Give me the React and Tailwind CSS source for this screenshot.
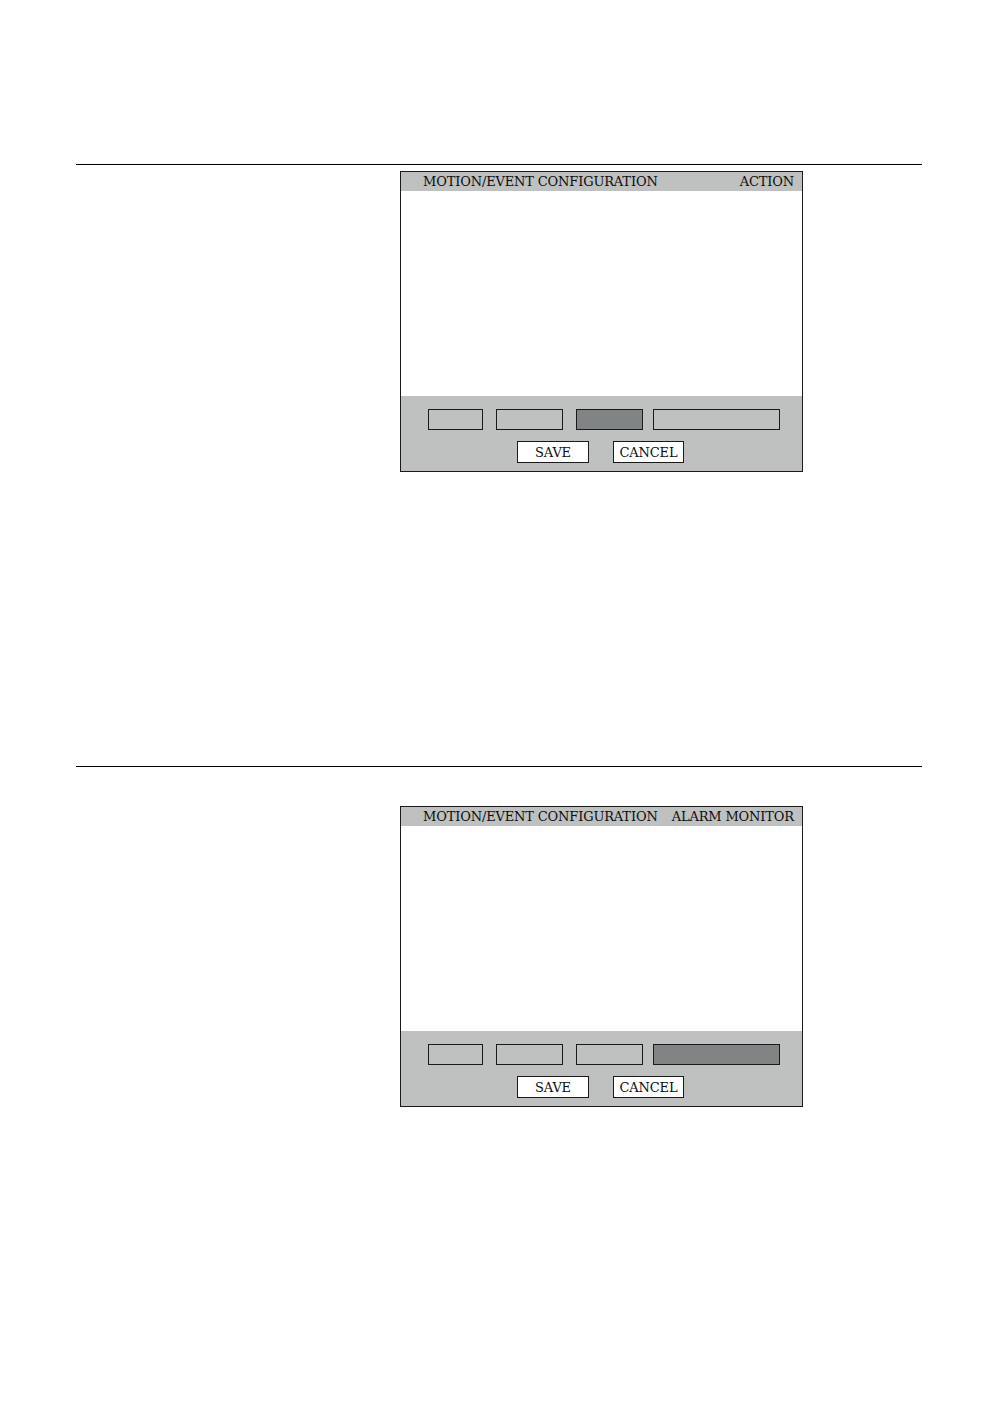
import React from "react";

function Panel({ title, active }) {
  const boxes = [
    { w: "w-[55px]", ml: "ml-0" },
    { w: "w-[67px]", ml: "ml-[13px]" },
    { w: "w-[67px]", ml: "ml-[13px]" },
    { w: "w-[127px]", ml: "ml-[10px]" },
  ];
  return (
    <div className="ml-[324px] w-[403px] h-[301px] border border-[#1a1a1a] flex flex-col">
      <div className="h-[19px] bg-[#bfc0c0] flex items-center justify-between pl-[22px] pr-[8px] text-[13px] leading-none tracking-[-0.15px] text-[#0d0d0d] whitespace-nowrap">
        <span>MOTION/EVENT CONFIGURATION</span>
        <span>{title}</span>
      </div>
      <div className="h-[205px] bg-white" />
      <div className="flex-1 bg-[#bfc0c0] flex flex-col">
        <div className="flex pl-[27px] mt-[13px]">
          {boxes.map((b, i) => (
            <div
              key={i}
              className={`${b.w} ${b.ml} h-[21px] border border-[#1a1a1a] ${
                i === active ? "bg-[#808484]" : "bg-[#bfc0c0]"
              }`}
            />
          ))}
        </div>
        <div className="flex justify-center gap-[24px] mt-[11px] pr-[2px] text-[13px] leading-none tracking-[-0.15px] text-[#0d0d0d]">
          <div className="w-[72px] h-[22px] bg-white border border-[#1a1a1a] flex items-center justify-center">
            SAVE
          </div>
          <div className="w-[71px] h-[22px] bg-white border border-[#1a1a1a] flex items-center justify-center">
            CANCEL
          </div>
        </div>
      </div>
    </div>
  );
}

export default function App() {
  return (
    <div
      className="w-[998px] h-[1418px] bg-white"
      style={{ fontFamily: '"DejaVu Serif", "Liberation Serif", serif' }}
    >
      <div className="pt-[164px] pl-[76px] w-[922px]">
        <div className="border-t border-black pt-[6px]">
          <Panel title="ACTION" active={2} />
        </div>
        <div className="border-t border-black mt-[294px] pt-[39px]">
          <Panel title="ALARM MONITOR" active={3} />
        </div>
      </div>
    </div>
  );
}
